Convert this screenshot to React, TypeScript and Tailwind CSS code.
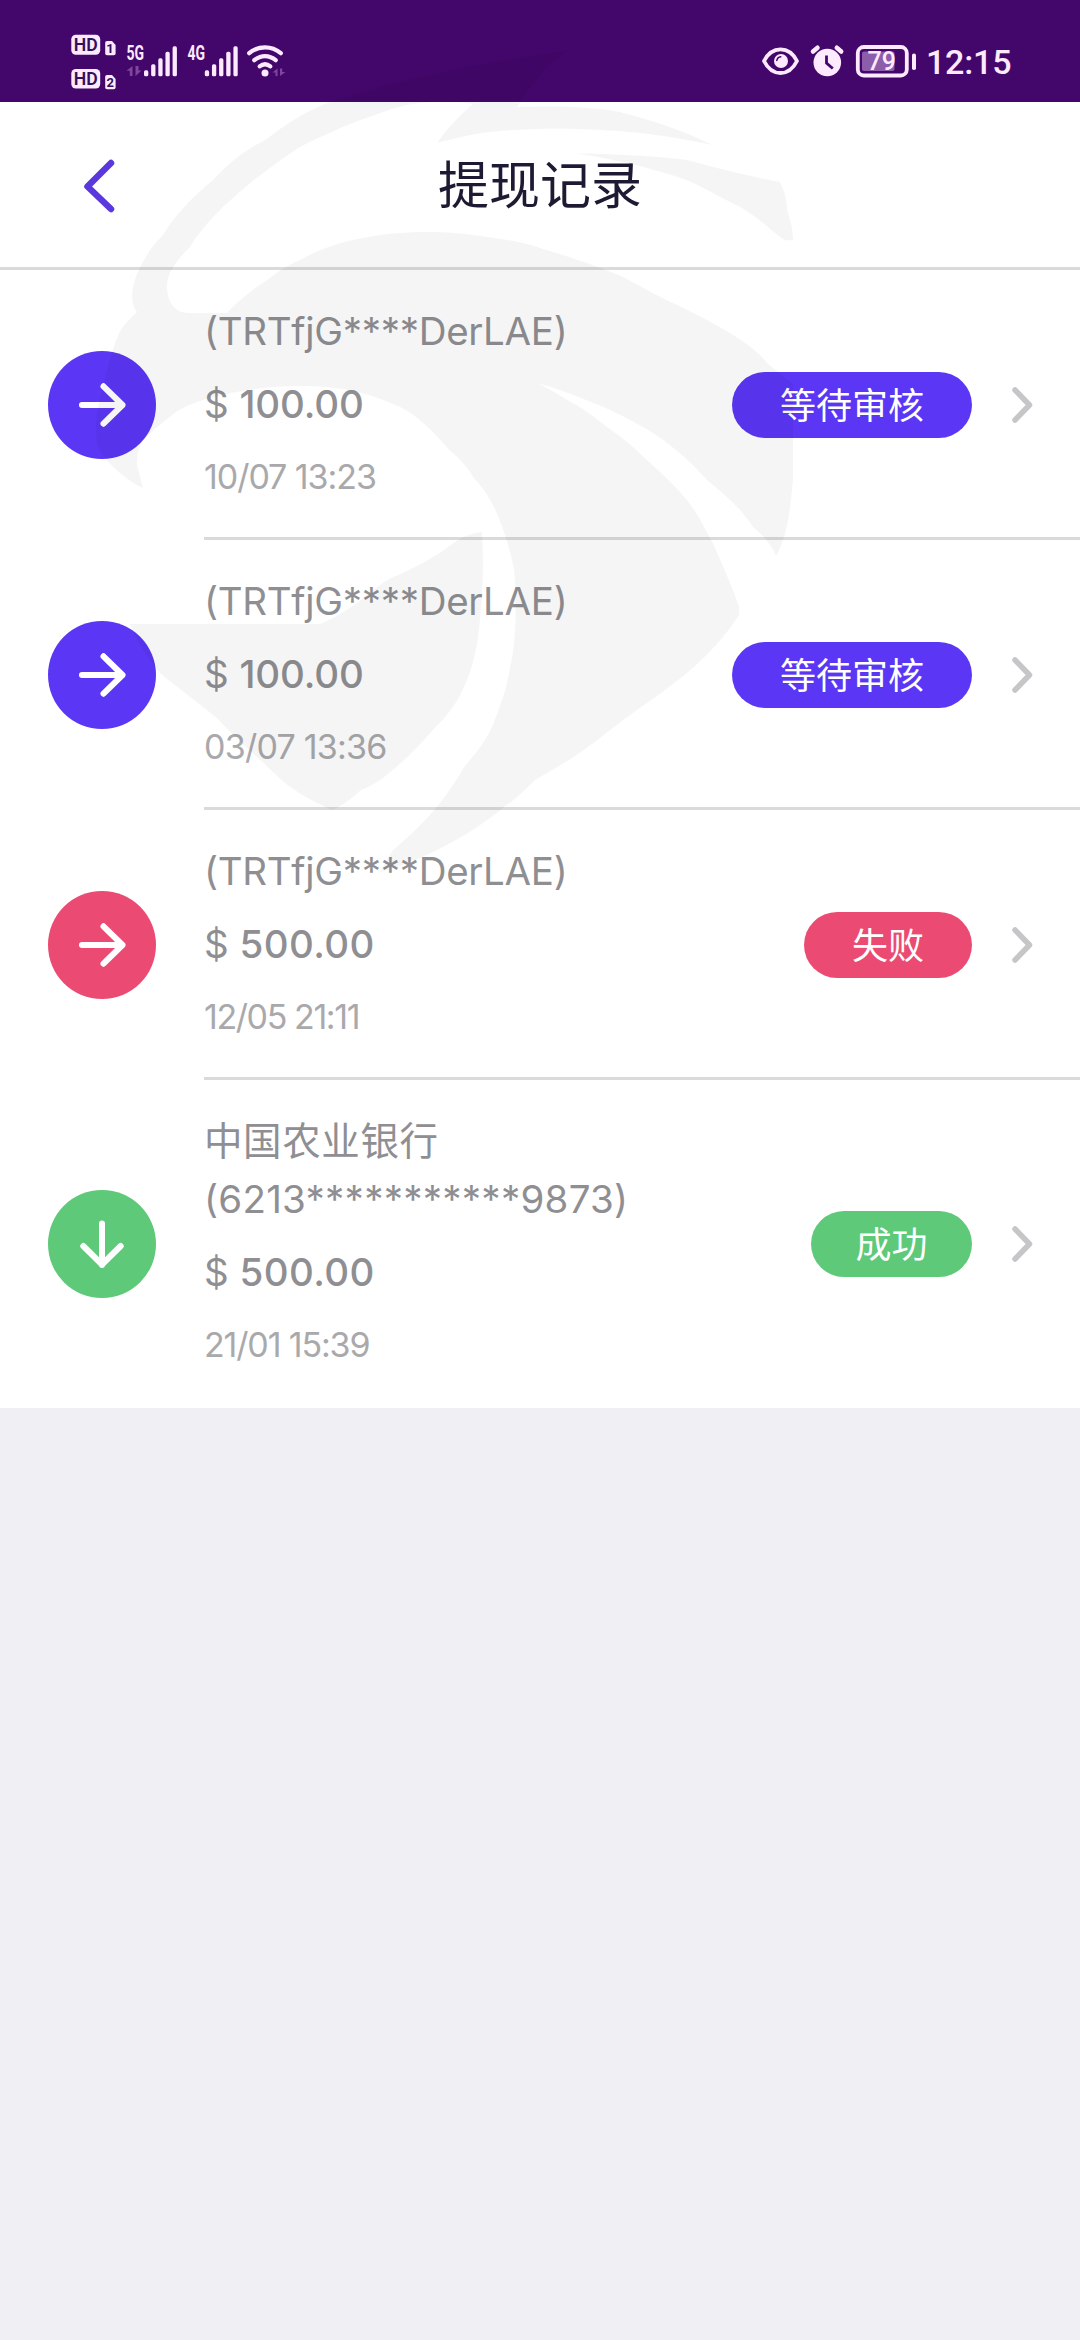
import React from 'react';

type Status = 'pending' | 'failed' | 'success';

interface RecordItem {
  lines: { text: string; tracking: string }[];
  amount: string;
  amountTracking: string;
  time: string;
  timeTracking: string;
  status: Status;
  label: string;
}

const WALLET = { text: '(TRTfjG****DerLAE)', tracking: 'tracking-[-0.3px]' };

const RECORDS: RecordItem[] = [
  { lines: [WALLET], amount: '100.00', amountTracking: 'tracking-[-0.15px]', time: '10/07 13:23', timeTracking: 'tracking-[-1.05px]', status: 'pending', label: '等待审核' },
  { lines: [WALLET], amount: '100.00', amountTracking: 'tracking-[-0.15px]', time: '03/07 13:36', timeTracking: 'tracking-[-0.77px]', status: 'pending', label: '等待审核' },
  { lines: [WALLET], amount: '500.00', amountTracking: 'tracking-[0.4px]', time: '12/05 21:11', timeTracking: 'tracking-[-1.4px]', status: 'failed', label: '失败' },
  {
    lines: [
      { text: '中国农业银行', tracking: 'tracking-[0.6px]' },
      { text: '(6213***********9873)', tracking: 'tracking-[0.25px]' },
    ],
    amount: '500.00',
    amountTracking: 'tracking-[0.4px]',
    time: '21/01 15:39',
    timeTracking: 'tracking-[-1.15px]',
    status: 'success',
    label: '成功',
  },
];

const FILL: Record<Status, string> = {
  pending: 'bg-[#5b37f5]',
  failed: 'bg-[#eb4b72]',
  success: 'bg-[#5ec978]',
};

const PILL: Record<Status, string> = {
  pending: 'w-[240px]',
  failed: 'w-[168px]',
  success: 'w-[161px]',
};

function LeftStatus() {
  const bars = [6, 12, 18, 24.5, 30];
  return (
    <svg className="h-[102px] w-[220px]" viewBox="70 0 220 102" fill="#fdeaff" fontFamily="Roboto, sans-serif">
      <rect x="71.3" y="34.7" width="28.9" height="20" rx="4.5" />
      <rect x="71.3" y="68.9" width="28.9" height="19.6" rx="4.5" />
      <path d="M107 41h5l3.6 4V53.5a1.8 1.8 0 0 1-1.8 1.8H107a1.8 1.8 0 0 1-1.8-1.8V42.8A1.8 1.8 0 0 1 107 41z" />
      <path d="M107 75h5l3.6 4V87.5a1.8 1.8 0 0 1-1.8 1.8H107a1.8 1.8 0 0 1-1.8-1.8V76.8a1.8 1.8 0 0 1 1.8-1.8z" />
      <g fill="#33105a" textAnchor="middle">
        <text x="85.7" y="51.2" fontSize="18" fontWeight="600" textLength="24" lengthAdjust="spacingAndGlyphs">HD</text>
        <text x="85.7" y="85.2" fontSize="18" fontWeight="600" textLength="24" lengthAdjust="spacingAndGlyphs">HD</text>
        <text x="110" y="53.2" fontSize="13" fontWeight="700">1</text>
        <text x="110.2" y="87.2" fontSize="13" fontWeight="700">2</text>
      </g>
      <text x="126.5" y="59.8" fontSize="19.5" fontWeight="700" textLength="17.5" lengthAdjust="spacingAndGlyphs">5G</text>
      <text x="187.5" y="59.8" fontSize="19.5" fontWeight="700" textLength="17.5" lengthAdjust="spacingAndGlyphs">4G</text>
      {bars.map((h, i) => (
        <g key={h}>
          <rect x={144 + i * 7.15} y={76.3 - h} width="4.3" height={h} rx="1.6" />
          <rect x={204.8 + i * 7.15} y={76.3 - h} width="4.3" height={h} rx="1.6" />
        </g>
      ))}
      <g fill="none" stroke="#fdeaff" strokeWidth="4.2" strokeLinecap="round">
        <path d="M249.2 53.2C258.5 45.3 271.500 45.3 280.8 53.2" />
        <path d="M254.3 60.2C260.8 54.7 269.2 54.7 275.7 60.2" />
        <path d="M259.6 66.3C263 63.7 267 63.7 270.4 66.3" />
      </g>
      <circle cx="265" cy="73" r="3.5" />
      <g fill="#7d479c">
        <path d="M132.5 66v10h-2.7v-5.2h-3.3zM135.5 66v10l6-5.5h-3V66z" />
        <path d="M277.5 68.5v7.5h-2v-3.5h-3zM280 68.5v7.5l5.5-4h-3.3v-3.5z" />
      </g>
    </svg>
  );
}

function RightStatus() {
  return (
    <svg className="h-[102px] w-[156px]" viewBox="760 0 156 102" fill="#fdeaff">
      <path d="M763 61C771 45.5 788 45.5 796 61C788 77 771 77 763 61z" fill="none" stroke="#fdeaff" strokeWidth="3.8" strokeLinejoin="round" />
      <circle cx="780" cy="61" r="7" />
      <path d="M775.8 60.5a4.5 4.5 0 0 1 4-3.8" fill="none" stroke="#43076b" strokeWidth="1.5" strokeLinecap="round" />
      <circle cx="826.3" cy="62.5" r="13.8" />
      <path d="M812 51.5L816.5 47.7M840.2 51.5L835.8 47.7" stroke="#fdeaff" strokeWidth="4.5" strokeLinecap="round" />
      <path d="M825.5 55.5v7.5l6.3 5.5" fill="none" stroke="#43076b" strokeWidth="2.8" />
      <rect x="856.8" y="47" width="49" height="28.5" rx="6" fill="none" stroke="#fdeaff" strokeWidth="3.8" />
      <rect x="861" y="51.5" width="32.5" height="19.5" rx="2" fill="#8b5daa" />
      <text x="880.8" y="70.2" fontFamily="Roboto, sans-serif" fontSize="25" fontWeight="500" textAnchor="middle">79</text>
      <rect x="911" y="53.5" width="4" height="16.5" rx="1.8" />
    </svg>
  );
}

function StatusBar() {
  return (
    <div className="flex h-[102px] items-start bg-[#43076b] pl-[70px] pr-[69px]">
      <LeftStatus />
      <div className="flex-1" />
      <RightStatus />
      <span className="ml-[9px] w-[85px] whitespace-nowrap pt-[37px] font-['Roboto'] text-[34px] font-medium leading-[51px] tracking-[-0.2px] text-[#fdeaff]">
        12:15
      </span>
    </div>
  );
}

function Header() {
  return (
    <header className="grid h-[168px] grid-cols-[204px_1fr_204px] items-center border-b-[3px] border-[#dadadb] bg-white">
      <svg className="ml-[80px] h-[60px] w-[40px]" viewBox="0 0 40 60" fill="none" stroke="#5a38dd" strokeWidth="6.5" strokeLinecap="round" strokeLinejoin="round">
        <path d="M31 8L7.5 31.5L31 54" />
      </svg>
      <h1 className="pb-[6px] text-center font-['Noto_Sans_CJK_SC'] text-[51px] leading-[72px] text-[#1f1a33]">提现记录</h1>
    </header>
  );
}

function Badge({ status }: { status: Status }) {
  return (
    <div className={`ml-[48px] flex size-[108px] shrink-0 items-center justify-center rounded-full ${FILL[status]}`}>
      <svg className="size-[54px]" viewBox="0 0 54 54" fill="none" stroke="#ffffff" strokeWidth="6" strokeLinecap="round" strokeLinejoin="round">
        {status === 'success' ? (
          <path d="M27 6.5V48M8.3 29L27 47.5L45.7 29" />
        ) : (
          <path d="M7 27H47.5M28.5 8.3L47.5 27L28.5 45.7" />
        )}
      </svg>
    </div>
  );
}

function Row({ item, last }: { item: RecordItem; last: boolean }) {
  return (
    <li className={`flex items-center bg-white ${last ? 'h-[328px]' : 'h-[270px]'}`}>
      <Badge status={item.status} />
      <div className={`ml-[48px] flex h-full flex-1 items-center ${last ? '' : 'border-b-[3px] border-[#dadadb] pt-[3px]'}`}>
        <div className={`flex-1 self-start whitespace-nowrap font-['Inter','Noto_Sans_CJK_SC',sans-serif] text-[38.5px] leading-[58px] text-[#8f8f93] ${last ? 'pt-[32px]' : 'pt-[29px]'}`}>
          {item.lines.map((line) => (
            <p key={line.text} className={line.tracking}>{line.text}</p>
          ))}
          <p className="mt-[15px]">
            $ <span className={`font-medium ${item.amountTracking}`}>{item.amount}</span>
          </p>
          <p className={`mt-[18px] text-[34px] leading-[51px] text-[#a9a9ac] ${item.timeTracking}`}>{item.time}</p>
        </div>
        <span className={`flex h-[66px] items-center justify-center rounded-full pb-[4px] font-['Noto_Sans_CJK_SC'] text-[36px] leading-[62px] text-white ${PILL[item.status]} ${FILL[item.status]}`}>
          {item.label}
        </span>
        <svg className="ml-[36px] mr-[44px] h-[44px] w-[28px]" viewBox="0 0 28 44" fill="none" stroke="#c6c6c8" strokeWidth="5.5" strokeLinecap="round" strokeLinejoin="round">
          <path d="M7 7L21.5 22L7 37" />
        </svg>
      </div>
    </li>
  );
}

/** Translucent emblem laid over the top part of the screen. */
function Emblem() {
  return (
    <svg className="pointer-events-none absolute left-0 top-0 h-[900px] w-[1080px]" viewBox="0 0 1080 900" fill="#000000" fillOpacity="0.038">
      <path d="M330 102C380 84 480 62 570 50C545 64 532 85 517 107C550 106 590 106 620 112C655 121 690 133 712 145C670 136 640 132 600 130C550 127 490 129 457 138L437 143C450 125 460 115 473 104C450 100 430 101 407 105C370 115 340 127 300 147C265 170 245 187 223 207C205 225 195 238 190 247C175 262 168 273 167 285C167 303 175 313 190 313H227C235 304 250 291 267 280C280 270 290 264 300 260C320 249 335 244 353 240C380 234 400 232 427 232C450 232 470 234 487 237C510 240 525 243 537 247C570 257 600 267 623 277C645 288 655 295 673 303C695 313 715 324 730 333C745 342 760 353 767 363L793 384V480C790 510 788 535 776 556C772 546 765 537 753 527C740 507 725 495 707 480C690 461 675 448 653 433C635 422 612 410 593 403C575 395 555 388 537 383C550 389 560 395 567 400C580 406 595 417 607 427C622 437 635 448 647 460C662 473 676 487 687 500C700 516 706 532 713 543C721 562 733 588 739 607V615C725 637 710 652 694 667C665 692 640 707 614 727C585 751 560 766 535 780C520 795 512 802 504 807C485 823 470 832 456 840C435 852 410 864 380 872C385 864 388 857 393 850C410 836 427 819 440 803C450 790 458 778 464 767C476 753 485 742 492 727C500 707 507 688 510 667C516 645 517 600 514 570C510 548 504 530 494 507C488 495 482 487 473 477C466 465 460 459 449 450C434 432 418 416 400 407C365 391 335 386 300 386C260 386 200 395 175 413C165 421 157 426 151 433C138 442 137 455 137 465L143 488C130 482 110 468 98 448C92 420 100 400 105 378C110 355 115 343 120 331C124 324 130 319 137 312C131 305 131 293 134 283C137 270 150 247 163 235C175 215 192 197 213 180C230 162 245 150 265 140C285 125 305 111 330 102z" />
      <path d="M575 153C600 154 650 155 687 160C715 167 750 177 780 182C785 192 787 201 787 210C791 222 793 230 793 240C788 241 783 240 780 237C768 228 755 215 740 207C725 200 717 195 707 190C690 180 670 174 653 170C640 165 605 158 575 153z" />
      <path d="M130 624H320C335 618 345 611 357 603C370 594 380 583 393 577C415 568 430 559 444 550C455 542 464 534 482 532C484 560 483 590 480 620C478 645 473 668 464 687C457 704 446 717 433 730C421 744 407 758 393 770C381 780 372 786 361 790C350 800 342 806 332 810C311 800 290 790 274 773C254 754 234 737 219 720C200 704 178 688 160 673C148 660 138 643 130 624z" />
    </svg>
  );
}

export default function App() {
  return (
    <div className="relative min-h-[2340px] w-[1080px] overflow-hidden bg-[#efeff4]">
      <StatusBar />
      <Header />
      <ul className="flex flex-col">
        {RECORDS.map((item, i) => (
          <Row key={i} item={item} last={i === RECORDS.length - 1} />
        ))}
      </ul>
      <Emblem />
    </div>
  );
}
